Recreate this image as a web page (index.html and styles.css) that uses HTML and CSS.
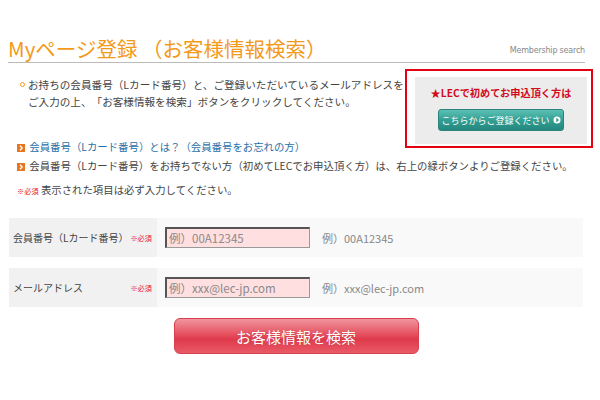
FILE: index.html
```html
<!DOCTYPE html>
<html lang="ja">
<head>
    <meta charset="UTF-8">
    <title>Myページ登録（お客様情報検索）</title>
    <link rel="stylesheet" href="styles.css">
</head>
<body>

    <div class="page">
        <div class="page-head">
            <h1>Myページ登録 （お客様情報検索）</h1>
            <span class="head-en">Membership search</span>
        </div>

        <div class="intro-area">
            <!-- 初めての方向けボックス（赤枠は注意書き） -->
            <div class="first-box">
                <p class="first-lead">★LECで初めてお申込頂く方は</p>
                <a class="btn-green" href="#">こちらからご登録ください
                    <svg width="8" height="8" viewBox="0 0 8 8"><circle cx="4" cy="4" r="3.5" fill="#fff"/><path d="M3.2 2.4 L5 4 L3.2 5.6" fill="none" stroke="#2c9287" stroke-width="1.3"/></svg>
                </a>
            </div>

            <p class="intro">
                <span class="ring"></span>
                <span>お持ちの会員番号（Lカード番号）と、ご登録いただいているメールアドレスを<br>ご入力の上、「お客様情報を検索」ボタンをクリックしてください。</span>
            </p>

            <ul class="links">
                <li>
                    <svg class="arrow" width="8" height="8" viewBox="0 0 8 8"><rect width="8" height="8" fill="#e8761e"/><path d="M3 1.8 L5.2 4 L3 6.2" fill="none" stroke="#fff" stroke-width="1.3"/></svg>
                    <a href="#">会員番号（Lカード番号）とは？（会員番号をお忘れの方）</a>
                </li>
                <li>
                    <svg class="arrow" width="8" height="8" viewBox="0 0 8 8"><rect width="8" height="8" fill="#e8761e"/><path d="M3 1.8 L5.2 4 L3 6.2" fill="none" stroke="#fff" stroke-width="1.3"/></svg>
                    会員番号（Lカード番号）をお持ちでない方（初めてLECでお申込頂く方）は、右上の緑ボタンよりご登録ください。
                </li>
            </ul>

            <p class="req-note"><span class="req">※必須</span> 表示された項目は必ず入力してください。</p>
        </div>

        <form class="search-form" onsubmit="return false;">
            <div class="form-row">
                <div class="form-label">会員番号（Lカード番号）<span class="req">※必須</span></div>
                <div class="form-value">
                    <input type="text" placeholder="例）00A12345">
                    <span class="example">例）00A12345</span>
                </div>
            </div>
            <div class="form-row">
                <div class="form-label">メールアドレス<span class="req">※必須</span></div>
                <div class="form-value">
                    <input type="text" placeholder="例）xxx@lec-jp.com">
                    <span class="example">例）xxx@lec-jp.com</span>
                </div>
            </div>

            <div class="submit-wrap">
                <button type="submit" class="btn-search">お客様情報を検索</button>
            </div>
        </form>
    </div>

</body>
</html>
```

FILE: styles.css
```css
body { margin: 0; background: #fff; color: #444; font-family: "Noto Sans CJK JP", "Noto Sans", sans-serif; font-size: 10.4px; text-spacing-trim: space-all; }
.page { width: 577px; padding-left: 8px; }

.page-head { display: flex; justify-content: space-between; align-items: flex-end; border-bottom: 1px solid #bbb; padding-top: 36px; height: 26px; box-sizing: content-box; }
.page-head h1 { margin: 0 0 2px; font-size: 20.5px; line-height: 24px; font-weight: normal; color: #f39a1a; }
.head-en { padding-bottom: 6px; font-family: "DejaVu Sans", sans-serif; font-size: 8px; line-height: 10px; color: #888; letter-spacing: -0.2px; }

.intro-area { padding: 13px 0 0 9px; }

.first-box { float: right; position: relative; width: 172px; height: 67px; margin: 1px -2px 0 10px; background: #ececec; text-align: center; }
/* 赤枠 */
.first-box::before { content: ""; position: absolute; top: -8px; left: -10px; right: -6px; bottom: -4px; border: 2px solid #e50012; }
.first-lead { margin: 0; padding-top: 9px; line-height: 13px; font-size: 10.2px; font-weight: bold; color: #d20a1a; }
.btn-green { display: inline-flex; align-items: center; justify-content: center; gap: 3px; width: 126px; height: 22px; margin-top: 10px; box-sizing: border-box; border: 1px solid #2a8479; border-radius: 3px; background: linear-gradient(#5cc0b4, #33a094 50%, #24877d); color: #fff; font-size: 9px; text-decoration: none; }

.intro { display: flex; gap: 3px; margin: 0; line-height: 17px; font-size: 10.6px; }
.ring { flex: none; width: 3px; height: 3px; margin: 6px 0 0 3px; border: 1.5px solid #f39a1a; border-radius: 50%; }

.links { list-style: none; margin: 27px 0 0; padding: 0; line-height: 19px; }
.links li { white-space: nowrap; }
.links .arrow { vertical-align: -1px; margin-right: 2px; }
.links a { color: #2a6fa8; text-decoration: none; }

.req-note { margin: 6px 0 0; line-height: 17px; }
.req { color: #e8202a; font-size: 7.2px; white-space: nowrap; flex: none; }

.search-form { margin: 18px 0 0 1px; width: 574px; }
.form-row { display: flex; height: 39px; margin-bottom: 11px; }
.form-label { display: flex; align-items: center; justify-content: space-between; width: 148px; padding: 0 5px 0 4px; box-sizing: border-box; background: #f1f1f1; font-size: 10px; white-space: nowrap; }
.form-value { flex: 1; display: flex; align-items: center; padding-left: 8px; background: #f9f9f9; }
.form-value input { width: 145px; height: 21px; box-sizing: border-box; padding: 0 2px; border: 1px solid #999; border-top: 2px solid #555; border-left: 2px solid #555; background: #ffdfe0; font-family: inherit; font-size: 11.5px; color: #444; }
.form-value input::placeholder { color: #8a8a8a; }
.example { margin-left: 12px; font-size: 11px; color: #888; }

.submit-wrap { text-align: center; margin-top: 7px; }
.btn-search { width: 245px; height: 36px; border: 1px solid #d8404f; border-radius: 6px; background: linear-gradient(#f0959f, #e5505f 45%, #df3a4b 60%, #e95a67); color: #fff; font-family: inherit; font-size: 15px; cursor: pointer; text-shadow: 0 0 1px rgba(0,0,0,0.2); }
```
